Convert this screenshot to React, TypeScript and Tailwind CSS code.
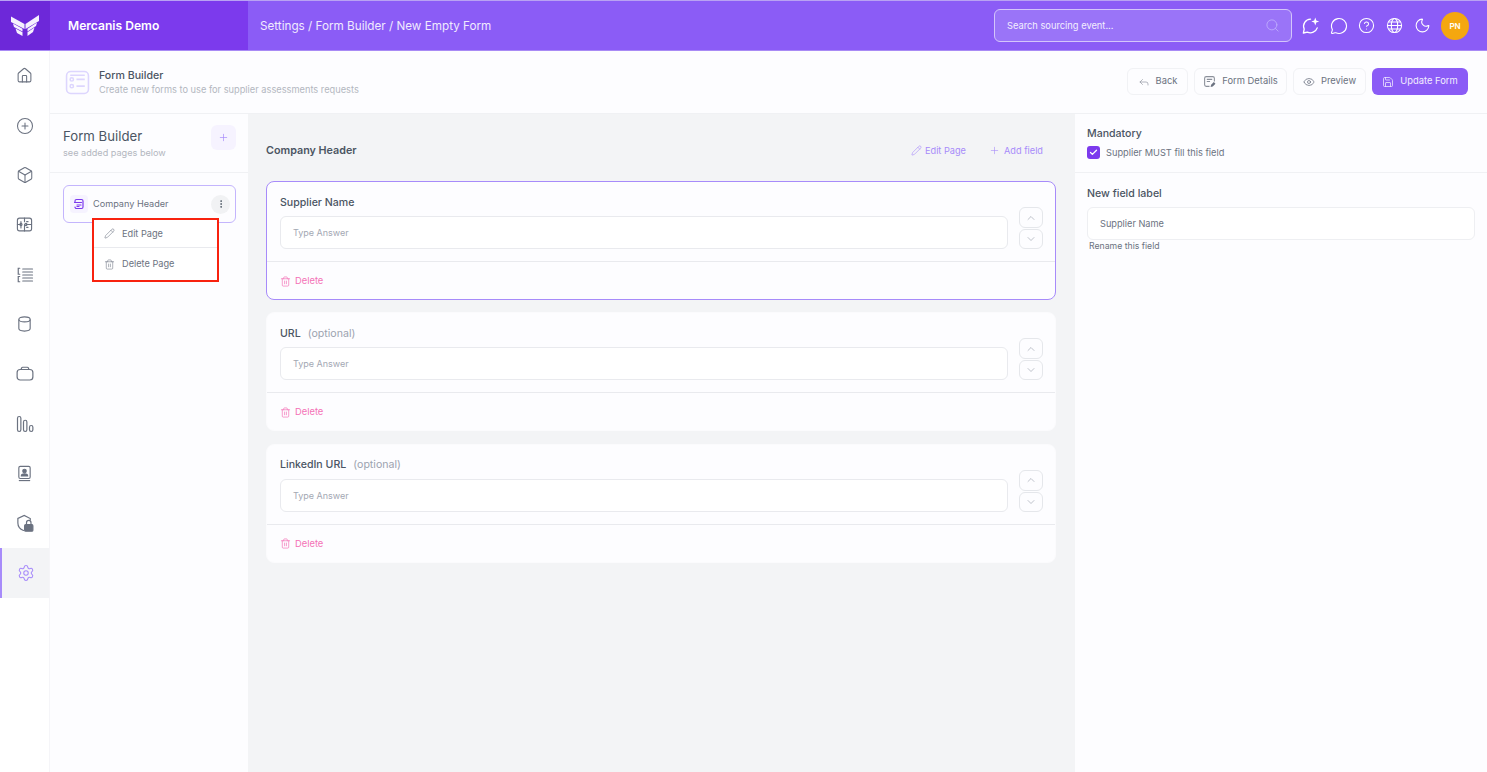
import React from "react";
import { Home, CirclePlus, Box, Settings, Search, MessageCircle, CircleHelp, Moon, Reply, Eye, Save, Pencil, Plus, Trash2, ChevronUp, ChevronDown, EllipsisVertical, Check } from "lucide-react";

const Tile = () => (
  <svg width="17" height="17" viewBox="0 0 24 24" fill="none" stroke="currentColor" strokeWidth="1.6" strokeLinecap="round">
    <rect x="2" y="3" width="20" height="18" rx="3" />
    <path d="M12 3v5M12 12v9M2 12h5M15 12h7M7 8v2M7 14v3M17 8h-2M17 16h-2" />
    <circle cx="7" cy="12" r="1.5" /><circle cx="14" cy="12" r="1.5" />
  </svg>
);
const ListIcon = () => (
  <svg width="18" height="18" viewBox="0 0 24 24" fill="none" stroke="currentColor" strokeWidth="1.6" strokeLinecap="round">
    <path d="M9 4h13M9 8h13M9 12h13M9 16h13M9 20h13M5 3H3v8h2M5 14H3v7h2" />
  </svg>
);
const Cylinder = () => (
  <svg width="17" height="18" viewBox="0 0 24 24" fill="none" stroke="currentColor" strokeWidth="1.6">
    <ellipse cx="12" cy="5.500" rx="8" ry="3.500" />
    <path d="M4 5.500v13c0 2 3.600 3.500 8 3.500s8-1.500 8-3.500v-13" />
  </svg>
);
const Brief = () => (
  <svg width="18" height="18" viewBox="0 0 24 24" fill="none" stroke="currentColor" strokeWidth="1.6">
    <rect x="1.500" y="6" width="21" height="14" rx="4" />
    <path d="M7 6c0-2 .5-3 2-3h6c1.500 0 2 1 2 3" />
  </svg>
);
const Bars = () => (
  <svg width="18" height="18" viewBox="0 0 24 24" fill="none" stroke="currentColor" strokeWidth="1.6">
    <rect x="2" y="2" width="4.500" height="20" rx="2.200" />
    <rect x="10" y="7" width="4.500" height="15" rx="2.200" />
    <rect x="18" y="14" width="4.500" height="8" rx="2.200" />
  </svg>
);
const Contact = () => (
  <svg width="17" height="17" viewBox="0 0 24 24" fill="none" stroke="currentColor" strokeWidth="1.6">
    <rect x="4" y="2" width="16" height="17" rx="2" />
    <circle cx="12" cy="8.500" r="2.500" fill="currentColor" />
    <path d="M7.500 15.500c0-2 2-3 4.500-3s4.500 1 4.500 3z" fill="currentColor" />
    <path d="M4 22h16" />
  </svg>
);
const ShieldLock = () => (
  <svg width="18" height="18" viewBox="0 0 24 24" fill="none" stroke="currentColor" strokeWidth="1.6">
    <path d="M10 22C5 20 2.500 16 2.500 12V6L11 2l8 4v2" strokeLinecap="round" />
    <rect x="11.500" y="14" width="11" height="9" rx="1.500" fill="currentColor" />
    <path d="M14 14v-2.500a3 3 0 0 1 6 0V14" />
  </svg>
);
const Logo = () => (
  <svg width="28" height="22" viewBox="0 0 28 22" fill="#f6f1fe">
    <path d="M0 1.500l13.500 7.500v5L0 7z" />
    <path d="M28 0L14.500 9v5L28 6z" />
    <path d="M2 8.500l9.500 5.200v2.800L3 12z" />
    <path d="M26 7.500l-9.500 6.200v2.800L25 11z" />
    <path d="M4.500 13.500l7 3.800V21L6 18z" />
    <path d="M23.500 12.500l-7 4.800V21L22 17z" />
  </svg>
);
const AiChat = () => (
  <svg width="19" height="19" viewBox="0 0 24 24" fill="none" stroke="white" strokeWidth="1.700" strokeLinejoin="round">
    <path d="M12 4a9 9 0 0 0-8 12.500L3 21.500l5-1.200A9 9 0 0 0 20.500 15" strokeLinecap="round" />
    <path d="M18 2l1.300 3.700L23 7l-3.700 1.300L18 12l-1.300-3.700L13 7l3.700-1.300z" fill="white" stroke="none" />
  </svg>
);
const GlobeLines = () => (
  <svg width="17" height="17" viewBox="0 0 24 24" fill="none" stroke="white" strokeWidth="1.500">
    <circle cx="12" cy="12" r="10" />
    <ellipse cx="12" cy="12" rx="4.500" ry="10" />
    <path d="M2 12h20M3.500 7h17M3.500 17h17" />
  </svg>
);
const Details = () => (
  <svg width="13" height="13" viewBox="0 0 24 24" fill="none" stroke="#8b909a" strokeWidth="2">
    <path d="M12 21H6a3 3 0 0 1-3-3V6a3 3 0 0 1 3-3h12a3 3 0 0 1 3 3v6" />
    <path d="M7 8h10M7 12h6" />
    <path d="M14 22l1-4 5-5 3 3-5 5z" fill="#6b7280" stroke="none" />
  </svg>
);
const FormIcon = () => (
  <svg width="25" height="25" viewBox="0 0 24 24" fill="none" stroke="#ddd6fe" strokeWidth="1.500">
    <rect x="1.500" y="1.500" width="21" height="21" rx="4" />
    <circle cx="6.500" cy="9" r="1.600" /><circle cx="6.500" cy="15.500" r="1.600" />
    <path d="M11 9h8M11 15.500h8M5 5h14" />
  </svg>
);
const PageIcon = () => (
  <svg width="12" height="12" viewBox="0 0 24 24" fill="none" stroke="#7c3aed" strokeWidth="2.400" strokeLinecap="round">
    <path d="M4 8V6a3 3 0 0 1 3-3h10a3 3 0 0 1 3 3v12a3 3 0 0 1-3 3H7a3 3 0 0 1-3-3" />
    <path d="M3 9h14M8 14h8M8 17h4" />
  </svg>
);

const navItems = [
  <Home size={17} strokeWidth={1.5} />,
  <CirclePlus size={18} strokeWidth={1.4} />,
  <Box size={18} strokeWidth={1.4} />,
  <Tile />,
  <ListIcon />,
  <Cylinder />,
  <Brief />,
  <Bars />,
  <Contact />,
  <ShieldLock />,
];

function Field({ label, optional, active }: { label: string; optional?: boolean; active?: boolean }) {
  return (
    <div className={`h-[119px] rounded-lg bg-[#fdfdff] ${active ? "border border-[#a78bfa]" : "border border-[#fbfbfd]"}`}>
      <div className="h-[79px] px-[13px] pt-[14px] flex items-start">
        <div className="flex-1 min-w-0">
          <div className="h-[14px] flex items-center text-[10.600px] font-medium text-[#4b5563] leading-none">
            {label}
            {optional && <span className="ml-[7px] text-[#9ca3af] font-normal">(optional)</span>}
          </div>
          <div className="mt-[6px] h-[33px] border border-[#e9eaee] rounded-md bg-white px-[12px] flex items-center text-[9px] text-[#a3a8b3]">
            Type Answer
          </div>
        </div>
        <div className="ml-[11px] mt-[11px] -mr-[1px] w-[24px] flex flex-col gap-[1px] text-[#9ca3af]">
          <div className="h-[21px] border border-[#e5e7eb] rounded-md flex items-center justify-center"><ChevronUp size={12} strokeWidth={1.300} /></div>
          <div className="h-[20px] border border-[#e5e7eb] rounded-md flex items-center justify-center"><ChevronDown size={12} strokeWidth={1.300} /></div>
        </div>
      </div>
      <div className="h-[37px] border-t border-[#e9eaee] px-[13px] pt-[2px] flex items-center gap-[4px] text-[9.350px] text-[#f472b6]">
        <Trash2 size={11} strokeWidth={1.500} />
        Delete
      </div>
    </div>
  );
}

function Btn({ icon, label, primary, w }: { icon: React.ReactNode; label: string; primary?: boolean; w: string }) {
  return (
    <div className={`${w} h-[27px] rounded-md flex items-center justify-center gap-[6px] text-[9.400px] ${primary ? "bg-[#8b5cf6] text-[#f3eefe]" : "border border-[#f1f2f5] text-[#6b7280]"}`}>
      {icon}
      {label}
    </div>
  );
}

export default function App() {
  return (
    <div className="relative w-full h-[772px] flex flex-col overflow-hidden bg-[#fdfdff] font-['Inter',sans-serif]">
      <header className="h-[51px] shrink-0 flex border-t border-[#b9a2f3] border-b border-b-[#a98bf5] text-white">
        <div className="w-[50px] bg-[#6d28d9] flex items-center justify-center"><Logo /></div>
        <div className="w-[198px] bg-[#7c3aed] flex items-center pl-[18px] pt-[1px] text-[12.100px] font-semibold">Mercanis Demo</div>
        <div className="flex-1 bg-[#8b5cf6] flex items-center pl-[12px] pr-[18px]">
          <span className="text-[11.700px] text-[#f0eafe] pt-[2px]">Settings / Form Builder / New Empty Form</span>
          <div className="ml-auto w-[298px] h-[33px] rounded-md border border-[#d4c5fb] bg-[#9a74f8] flex items-center justify-between pl-[12px] pr-[11px] text-[9.300px] text-[#f3eefe]">
            Search sourcing event...
            <Search size={15} strokeWidth={1.200} className="text-[#c4b5fd]" />
          </div>
          <div className="ml-[9px] w-[19px] flex justify-center"><AiChat /></div>
          <div className="ml-[9px] w-[19px] flex justify-center"><MessageCircle size={18} strokeWidth={1.500} /></div>
          <div className="ml-[9px] w-[19px] flex justify-center"><CircleHelp size={17} strokeWidth={1.500} /></div>
          <div className="ml-[9px] w-[19px] flex justify-center"><GlobeLines /></div>
          <div className="ml-[9px] w-[19px] flex justify-center"><Moon size={17} strokeWidth={1.500} /></div>
          <div className="ml-[9px] w-[28px] h-[28px] rounded-full bg-[#f5a70f] flex items-center justify-center text-[8px] font-semibold">PN</div>
        </div>
      </header>
      <div className="flex-1 flex min-h-0">
        <nav className="w-[50px] shrink-0 bg-white border-r border-[#f5f5f8] text-[#6b7280]">
          {navItems.map((n, i) => (
            <div key={i} className="h-[49.700px] flex items-center justify-center">{n}</div>
          ))}
          <div className="h-[50px] bg-[#f3f4f6] border-l-2 border-[#a78bfa] flex items-center justify-center text-[#a78bfa]">
            <Settings size={18} strokeWidth={1.400} />
          </div>
        </nav>
        <div className="flex-1 min-w-0 flex flex-col">
          <div className="h-[63px] shrink-0 border-b border-[#f0f1f4] flex items-center pl-[15px] pr-[19px]">
            <FormIcon />
            <div className="ml-[9px]">
              <div className="text-[10.600px] font-medium text-[#4b5563] leading-[14px]">Form Builder</div>
              <div className="text-[9.250px] text-[#b3b7c0] leading-[13px]">Create new forms to use for supplier assessments requests</div>
            </div>
            <div className="ml-auto -mt-[1px] flex gap-[6px]">
              <Btn w="w-[61px]" label="Back" icon={<Reply size={12} strokeWidth={1.300} className="text-[#8b909a]" />} />
              <Btn w="w-[93px]" label="Form Details" icon={<Details />} />
              <Btn w="w-[73px]" label="Preview" icon={<Eye size={12} strokeWidth={1.500} />} />
              <Btn w="w-[96px]" primary label="Update Form" icon={<Save size={12} strokeWidth={1.500} />} />
            </div>
          </div>
          <div className="flex-1 flex min-h-0">
            <aside className="w-[198px] shrink-0">
              <div className="h-[59px] border-b border-[#f0f1f4] flex items-start pl-[13px] pr-[12px]">
                <div className="pt-[12px]">
                  <div className="text-[13.200px] text-[#4b5563] leading-[20px]">Form Builder</div>
                  <div className="text-[9.150px] text-[#b3b7c0] leading-[14px]">see added pages below</div>
                </div>
                <div className="ml-auto mt-[11px] w-[25px] h-[25px] rounded-md bg-[#f6f3ff] flex items-center justify-center text-[#a78bfa]">
                  <Plus size={11} strokeWidth={1.500} />
                </div>
              </div>
              <div className="pl-[13px] pr-[12px] pt-[12px]">
                <div className="h-[38px] border border-[#c4b5fd] rounded-md flex items-center pl-[6px] pr-[5px]">
                  <div className="w-[18px] h-[18px] rounded bg-[#f6f3ff] flex items-center justify-center"><PageIcon /></div>
                  <span className="ml-[5px] text-[9.150px] text-[#6b7280]">Company Header</span>
                  <div className="ml-auto w-[19px] h-[19px] rounded-full bg-[#f1f2f4] flex items-center justify-center text-[#4b5563]"><EllipsisVertical size={10} /></div>
                </div>
              </div>
            </aside>
            <main className="flex-1 min-w-0 bg-[#f3f4f6] pl-[18px] pr-[19px]">
              <div className="h-[67px] flex items-center pr-[13px] pt-[6px]">
                <span className="text-[10.750px] font-semibold text-[#4b5563] pt-[2px]">Company Header</span>
                <div className="ml-auto flex items-center gap-[23px] text-[9.200px] text-[#a78bfa]">
                  <span className="flex items-center gap-[3px]"><Pencil size={11} strokeWidth={1.300} />Edit Page</span>
                  <span className="flex items-center gap-[4px]"><Plus size={11} strokeWidth={1.300} />Add field</span>
                </div>
              </div>
              <div className="flex flex-col gap-[12.400px]">
                <Field label="Supplier Name" active />
                <Field label="URL" optional />
                <Field label="LinkedIn URL" optional />
              </div>
            </main>
            <aside className="w-[412px] shrink-0 bg-[#fdfdff]">
              <div className="h-[59px] border-b border-[#f0f1f4] px-[12px] pt-[13px]">
                <div className="text-[10.600px] font-medium text-[#4b5563] leading-[13px]">Mandatory</div>
                <div className="mt-[6px] flex items-center gap-[6px] text-[9.250px] text-[#6b7280]">
                  <span className="w-[13px] h-[13px] rounded-[3px] bg-[#7c3aed] flex items-center justify-center text-white"><Check size={9} strokeWidth={3.500} /></span>
                  Supplier MUST fill this field
                </div>
              </div>
              <div className="px-[12px] pt-[14px]">
                <div className="text-[10.600px] font-medium text-[#4b5563] leading-[13px]">New field label</div>
                <div className="mt-[7px] h-[33px] border border-[#eeeff2] rounded-md bg-white flex items-center px-[12px] text-[9.200px] text-[#6b7280]">Supplier Name</div>
                <div className="ml-[2px] text-[8.700px] text-[#6b7280] leading-[12px]">Rename this field</div>
              </div>
            </aside>
          </div>
        </div>
      </div>
      <div className="absolute left-[92px] top-[218px] w-[127px] h-[64px] border-2 border-[#f8220f] bg-white text-[9.200px] text-[#6b7280]">
        <div className="h-[28px] flex items-center pl-[10px] gap-[7px] border-b border-[#e9eaee]"><Pencil size={11} strokeWidth={1.200} />Edit Page</div>
        <div className="h-[32px] flex items-center pl-[10px] gap-[7px]"><Trash2 size={11} strokeWidth={1.200} />Delete Page</div>
      </div>
    </div>
  );
}
